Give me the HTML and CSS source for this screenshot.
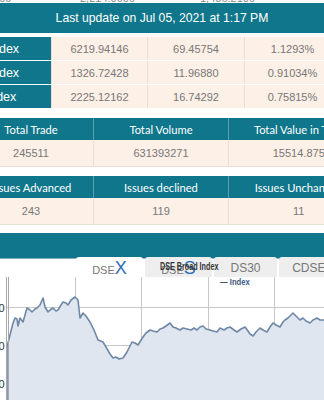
FILE: index.html
```html
<!DOCTYPE html>
<html lang="en">
<head>
    <meta charset="UTF-8">
    <meta name="viewport" content="width=device-width, initial-scale=1.0">
    <title>DSE Market Summary</title>
    <link rel="stylesheet" href="styles.css">
</head>
<body>
    <div class="top-cut">
        <span class="cut-a">0.00</span>
        <span class="cut-b">2,214.0000</span>
        <span class="cut-c">1,456.2100</span>
    </div>

    <div class="update-bar">Last update on Jul 05, 2021 at 1:17 PM</div>

    <table class="index-table">
        <colgroup>
            <col style="width: 107px">
            <col style="width: 96px">
            <col style="width: 97px">
            <col style="width: 96px">
        </colgroup>
        <tr>
            <td class="label">DSEX Index</td>
            <td>6219.94146</td>
            <td>69.45754</td>
            <td>1.1293%</td>
        </tr>
        <tr>
            <td class="label">DSES Index</td>
            <td>1326.72428</td>
            <td>11.96880</td>
            <td>0.91034%</td>
        </tr>
        <tr>
            <td class="label">DS30 Index</td>
            <td>2225.12162</td>
            <td>16.74292</td>
            <td>0.75815%</td>
        </tr>
    </table>

    <table class="stat-table">
        <colgroup>
            <col style="width: 125px">
            <col style="width: 135px">
            <col style="width: 140px">
        </colgroup>
        <tr>
            <th>Total Trade</th>
            <th>Total Volume</th>
            <th>Total Value in Taka</th>
        </tr>
        <tr>
            <td>245511</td>
            <td>631393271</td>
            <td>15514.875</td>
        </tr>
    </table>

    <table class="stat-table">
        <colgroup>
            <col style="width: 125px">
            <col style="width: 135px">
            <col style="width: 140px">
        </colgroup>
        <tr>
            <th>Issues Advanced</th>
            <th>Issues declined</th>
            <th>Issues Unchanged</th>
        </tr>
        <tr>
            <td>243</td>
            <td>119</td>
            <td>11</td>
        </tr>
    </table>

    <div class="chart-head"></div>

    <div class="tabs">
        <div class="tab active">DSE<span class="big">X</span></div>
        <div class="tab">DSE<span class="big">S</span></div>
        <div class="tab">DS30</div>
        <div class="tab">CDSET</div>
        <span class="chart-title">DSE Broad Index</span>
    </div>

    <div class="chart">
        <span class="legend">&mdash; Index</span>
        <svg width="324" height="123" viewBox="0 0 324 123">
            <g stroke="#c8c8c8" stroke-width="1">
                <line x1="75.5" y1="0" x2="75.5" y2="123"/>
                <line x1="141.5" y1="0" x2="141.5" y2="123"/>
                <line x1="208.5" y1="0" x2="208.5" y2="123"/>
                <line x1="274.5" y1="0" x2="274.5" y2="123"/>
                <line x1="6" y1="30.5" x2="324" y2="30.5"/>
                <line x1="6" y1="68.5" x2="324" y2="68.5"/>
                <line x1="6" y1="106.5" x2="324" y2="106.5"/>
            </g>
            <polygon fill="#dfe6f0" points="7,123 7,70 10,58 13,46 15,41 17,42 18,49 20,41 23,45 25,38 27,31 30,33 32,35 35,32 37,31 40,28 43,21 45,30 48,35 50,33 53,31 56,34 58,33 61,28 63,25 66,26 68,28 71,23 75,20 78,23 80,41 83,36 86,39 90,45 94,53 98,63 103,65 106,70 110,77 113,81 116,80 119,82 123,81 127,75 132,65 135,66 138,68 143,60 146,56 150,53 153,54 157,55 160,52 163,51 166,49 170,46 173,50 176,51 180,53 183,51 187,52 191,53 194,51 197,53 200,50 203,49 206,52 210,53 213,54 217,55 220,51 224,53 227,51 230,50 234,53 237,55 241,52 245,50 248,54 250,57 253,59 256,55 260,51 263,53 267,55 270,50 273,46 276,48 280,50 283,45 285,43 288,41 293,36 296,39 300,43 303,41 306,44 310,46 313,43 317,41 320,43 324,43 324,123"/>
            <polyline fill="none" stroke="#6e88a6" stroke-width="1.6" stroke-linejoin="round" points="7,123 7,70 10,58 13,46 15,41 17,42 18,49 20,41 23,45 25,38 27,31 30,33 32,35 35,32 37,31 40,28 43,21 45,30 48,35 50,33 53,31 56,34 58,33 61,28 63,25 66,26 68,28 71,23 75,20 78,23 80,41 83,36 86,39 90,45 94,53 98,63 103,65 106,70 110,77 113,81 116,80 119,82 123,81 127,75 132,65 135,66 138,68 143,60 146,56 150,53 153,54 157,55 160,52 163,51 166,49 170,46 173,50 176,51 180,53 183,51 187,52 191,53 194,51 197,53 200,50 203,49 206,52 210,53 213,54 217,55 220,51 224,53 227,51 230,50 234,53 237,55 241,52 245,50 248,54 250,57 253,59 256,55 260,51 263,53 267,55 270,50 273,46 276,48 280,50 283,45 285,43 288,41 293,36 296,39 300,43 303,41 306,44 310,46 313,43 317,41 320,43 324,43"/>
            <g stroke="#a8a8a8" stroke-width="1">
                <line x1="6.5" y1="0" x2="6.5" y2="123"/>
                <line x1="8.5" y1="0" x2="8.5" y2="123"/>
            </g>
            <g fill="#333" font-size="11" font-family="Liberation Sans, Arial, sans-serif" text-anchor="end">
                <text x="4.5" y="34.5">600</text>
                <text x="4.5" y="72.5">400</text>
                <text x="4.5" y="110.5">200</text>
            </g>
        </svg>
    </div>
</body>
</html>
```

FILE: styles.css
```css
body {
    font-family: "Liberation Sans", Arial, sans-serif;
    background-color: #fff;
    margin: 0;
    width: 324px;
    overflow: hidden;
}
.top-cut {
    height: 3px;
    overflow: hidden;
    display: flex;
    align-items: flex-end;
    font-size: 11px;
    line-height: 10px;
    color: #888;
}
.cut-a {
    margin-left: -10px;
    width: 90px;
}
.cut-b {
    width: 120px;
}
.update-bar {
    background-color: #10768b;
    color: #fff;
    height: 30px;
    line-height: 30px;
    text-align: center;
    font-size: 12.2px;
}
.index-table {
    border-collapse: separate;
    border-spacing: 0 1px;
    table-layout: fixed;
    width: 396px;
    margin: 3px 0 0 -56px;
    font-size: 11px;
}
.index-table td {
    height: 23px;
    padding: 0;
    text-align: center;
    color: #777;
    background-color: #fdf0e6;
    border-left: 1px solid #ebded2;
}
.index-table td.label {
    background-color: #10768b;
    color: #fff;
    text-align: left;
    padding-left: 7px;
    font-size: 12.5px;
    border-left: none;
}
.stat-table {
    border-collapse: collapse;
    table-layout: fixed;
    width: 400px;
    margin: 9px 0 0 -32px;
}
.stat-table th {
    background-color: #10768b;
    color: #fff;
    font-family: Lato, "Liberation Sans", sans-serif;
    font-weight: normal;
    font-size: 11.2px;
    height: 22px;
    padding: 0;
    border-left: 1px solid #5b9fae;
}
.stat-table td {
    background-color: #fdf0e6;
    color: #777;
    font-size: 11px;
    text-align: center;
    height: 26px;
    padding: 0;
    border-left: 1px solid #ebded2;
    border-bottom: 1px solid #ebded2;
}
.chart-head {
    height: 25px;
    margin-top: 8px;
    background-color: #10768b;
    border-bottom: 1px solid #7fb2be;
}
.tabs {
    position: relative;
    display: flex;
    gap: 2px;
    height: 20px;
    margin-top: -2px;
    padding-left: 76px;
}
.tab {
    flex: none;
    width: 67px;
    background-color: #eee;
    border-radius: 3px 3px 0 0;
    text-align: center;
    color: #777;
    font-size: 11px;
    line-height: 22px;
    white-space: nowrap;
    overflow: hidden;
}
.tab:nth-child(3) {
    width: 63px;
    font-size: 12px;
}
.tab:nth-child(4) {
    font-size: 12px;
}
.tab.active {
    background-color: #fff;
}
.tab .big {
    font-size: 18px;
    color: #2f6db5;
}
.chart-title {
    position: absolute;
    left: 160px;
    top: 4px;
    font-size: 10px;
    font-weight: bold;
    color: #333;
    transform: scaleX(0.72);
    transform-origin: left center;
    white-space: nowrap;
}
.chart {
    position: relative;
    height: 123px;
}
.chart svg {
    display: block;
}
.legend {
    position: absolute;
    left: 220px;
    top: 0;
    font-size: 9px;
    font-weight: bold;
    color: #3d5a80;
    transform: scaleX(0.85);
    transform-origin: left top;
}
```
